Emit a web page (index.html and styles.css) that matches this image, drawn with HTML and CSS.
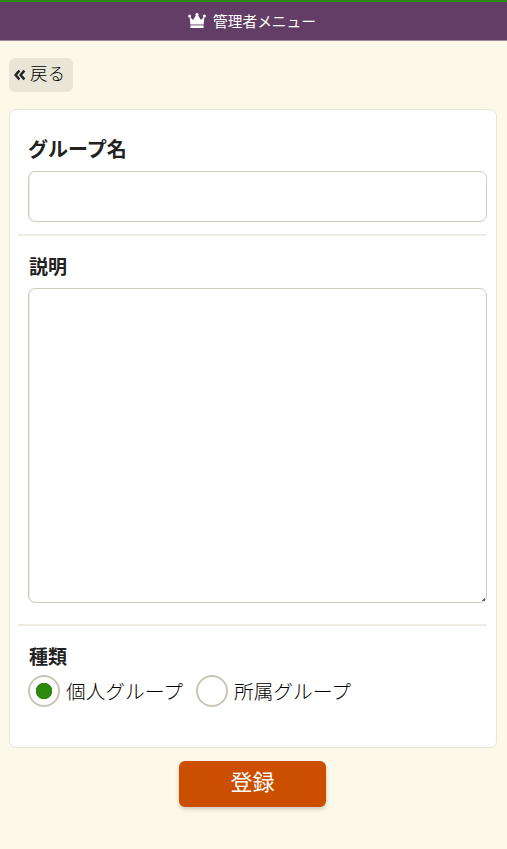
FILE: index.html
```html
<!DOCTYPE html>
<html lang="ja">
<head>
  <meta charset="utf-8">
  <title>管理者メニュー</title>
  <link rel="stylesheet" href="styles.css">
</head>
<body>
  <div class="header">
    <svg class="crown" viewBox="0 0 18 15" aria-hidden="true">
      <path d="M1.6 3.5 L5 7 L8.2 2 L9.8 2 L13 7 L16.4 3.5 L15.6 11.6 L2.4 11.6 Z" />
      <circle cx="1.6" cy="3" r="1.5" />
      <circle cx="9" cy="1.6" r="1.6" />
      <circle cx="16.4" cy="3" r="1.5" />
      <rect x="2.4" y="12.4" width="13.2" height="2.6" />
    </svg>
    <span class="header-title">管理者メニュー</span>
  </div>

  <div class="main-content">
    <a class="back-button" href="#">
      <svg class="back-icon" viewBox="0 0 12 12" aria-hidden="true">
        <path d="M5.4 1.6 L1.6 6 L5.4 10.4 M10.4 1.6 L6.6 6 L10.4 10.4" />
      </svg>
      <span class="back-text">戻る</span>
    </a>

    <form class="card">
      <div class="field-name">
        <label class="field-label" for="groupName">グループ名</label>
        <input id="groupName" class="text-input" type="text">
      </div>

      <div class="field-desc">
        <label class="field-label small" for="groupDesc">説明</label>
        <div class="area-wrap">
          <textarea id="groupDesc" class="text-area"></textarea>
        </div>
      </div>

      <div class="field-type">
        <div class="field-label small">種類</div>
        <div class="radio-group">
          <label class="radio-item">
            <input class="radio" type="radio" name="groupType" checked>
            <span class="radio-text">個人グループ</span>
          </label>
          <label class="radio-item">
            <input class="radio" type="radio" name="groupType">
            <span class="radio-text">所属グループ</span>
          </label>
        </div>
      </div>
    </form>

    <div class="submit-row">
      <button class="submit-button" type="button"><span class="submit-text">登録</span></button>
    </div>
  </div>
</body>
</html>
```

FILE: styles.css
```css
* {
  box-sizing: border-box;
}

body {
  margin: 0;
  min-height: 849px;
  background: #fdf9e8;
  color: #222;
  font-family: "Noto Sans CJK JP", "Noto Sans", sans-serif;
}

.header {
  display: flex;
  align-items: center;
  justify-content: center;
  gap: 7px;
  height: 41px;
  padding: 0 3px 1px 0;
  background: #623e66;
  border-top: 2px solid #2b8a0e;
  border-bottom: 1px solid #9a8a9c;
  color: #fff;
}

.crown {
  width: 18px;
  height: 15px;
  fill: #fff;
}

.header-title {
  font-size: 14.7px;
  line-height: 20px;
}

.main-content {
  padding: 17px 10px 0 9px;
}

.back-button {
  display: inline-flex;
  align-items: center;
  gap: 4px;
  width: 64px;
  height: 34px;
  padding-left: 5px;
  background: #e9e6d8;
  border-radius: 6px;
  color: #000;
  font-size: 17.5px;
  font-weight: 300;
  text-decoration: none;
}

.back-text {
  padding-bottom: 6px;
}

.back-icon {
  width: 12px;
  height: 12px;
  fill: none;
  stroke: #222;
  stroke-width: 2.4;
}

.card {
  height: 639px;
  margin-top: 17px;
  padding: 0 9px 0 8px;
  background: #fff;
  border: 1px solid #e9e6d8;
  border-radius: 7px;
}

.field-name {
  height: 126px;
  padding-top: 25px;
  border-bottom: 2px solid #eeece4;
}

.field-desc {
  height: 390px;
  padding-top: 16px;
  border-bottom: 2px solid #eeece4;
}

.field-type {
  padding-top: 16px;
}

.field-label {
  display: block;
  height: 36px;
  padding-left: 10px;
  font-size: 20px;
  font-weight: 700;
  line-height: 28px;
}

.field-label.small {
  height: 36px;
  padding-left: 11px;
  font-size: 19px;
}

.field-type .field-label.small {
  height: 33px;
}

.text-input,
.area-wrap {
  width: 459px;
  margin-left: 10px;
}

.text-input,
.text-area {
  display: block;
  padding: 6px 10px;
  background: #fff;
  border: 1px solid #cfccbf;
  border-radius: 7px;
  box-shadow: inset 1px 0 0 #ecebe4;
  font-family: inherit;
  font-size: 18px;
}

.text-input {
  height: 51px;
}

.area-wrap {
  position: relative;
}

.text-area {
  width: 100%;
  height: 315px;
  resize: none;
}

/* small resize grip in the corner */
.area-wrap::after {
  content: '';
  position: absolute;
  right: 2px;
  bottom: 2px;
  width: 3px;
  height: 3px;
  background: linear-gradient(135deg, transparent 40%, #666 40%);
}

.radio-group {
  display: flex;
  gap: 13px;
  padding-left: 10px;
}

.radio-item {
  display: flex;
  align-items: center;
  gap: 6px;
  color: #000;
  font-size: 19.7px;
  font-weight: 300;
}

.radio-text {
  padding-bottom: 2px;
}

.radio {
  appearance: none;
  width: 32px;
  height: 32px;
  margin: 0;
  background: #fff;
  border: 2px solid #c9c6b8;
  border-radius: 50%;
}

.radio:checked {
  background: radial-gradient(circle, #2b8a0e 0 8px, #fff 8.5px);
}

.submit-row {
  display: flex;
  justify-content: center;
  margin-top: 13px;
  padding-right: 1px;
}

.submit-button {
  width: 147px;
  height: 46px;
  background: #cc4e00;
  border: none;
  border-radius: 6px;
  box-shadow: 0 2px 4px rgba(0, 0, 0, 0.2);
  color: #fff;
  font-family: inherit;
  font-size: 22px;
}

.submit-text {
  display: block;
  padding-bottom: 8px;
}
```
